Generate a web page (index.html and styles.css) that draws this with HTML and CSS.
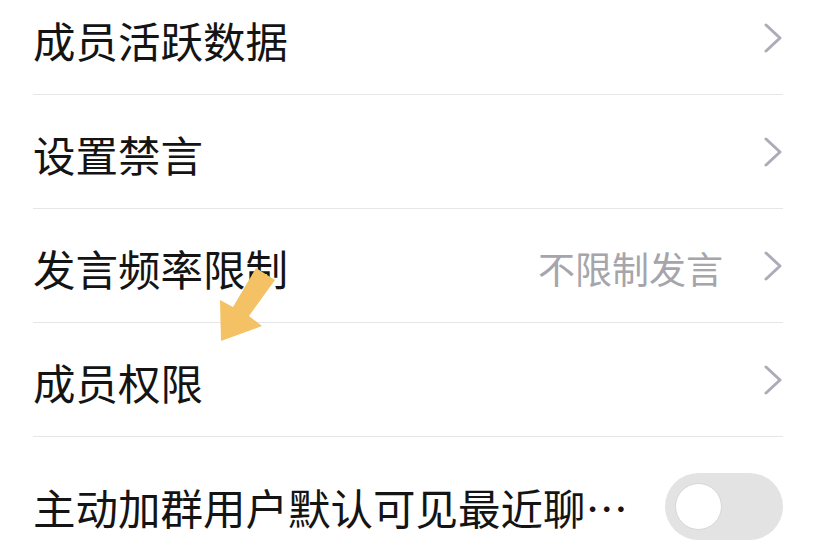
FILE: index.html
```html
<!DOCTYPE html>
<html lang="zh-CN">
<head>
    <meta charset="UTF-8">
    <meta name="viewport" content="width=device-width, initial-scale=1.0">
    <title>群管理</title>
    <link rel="stylesheet" href="styles.css">
</head>
<body>
    <div class="page">
        <div class="list">
            <div class="row">
                <span class="label">成员活跃数据</span>
                <span class="chevron">
                    <svg width="18" height="30" viewBox="0 0 18 30"><polyline points="2,2 16,15 2,28" /></svg>
                </span>
            </div>
            <div class="row">
                <span class="label">设置禁言</span>
                <span class="chevron">
                    <svg width="18" height="30" viewBox="0 0 18 30"><polyline points="2,2 16,15 2,28" /></svg>
                </span>
            </div>
            <div class="row">
                <span class="label">发言频率限制</span>
                <span class="value">不限制发言</span>
                <span class="chevron">
                    <svg width="18" height="30" viewBox="0 0 18 30"><polyline points="2,2 16,15 2,28" /></svg>
                </span>
            </div>
            <div class="row">
                <span class="label">成员权限</span>
                <span class="chevron">
                    <svg width="18" height="30" viewBox="0 0 18 30"><polyline points="2,2 16,15 2,28" /></svg>
                </span>
            </div>
            <div class="row row-switch">
                <span class="label">主动加群用户默认可见最近聊天记录</span>
                <span class="switch"><span class="knob"></span></span>
            </div>
        </div>

        <!-- pointer arrow -->
        <svg class="pointer" width="60" height="80" viewBox="0 0 60 80">
            <polygon points="36,0 55,12 29,48 42,58 1,73 0,32 13,39" />
        </svg>
    </div>
</body>
</html>
```

FILE: styles.css
```css
* {
    margin: 0;
    padding: 0;
    box-sizing: border-box;
}

body {
    background: #fff;
    font-family: "Noto Sans CJK SC", "Noto Sans", sans-serif;
    overflow: hidden;
}

.page {
    position: relative;
    display: flow-root;
    width: 820px;
    height: 546px;
    overflow: hidden;
}

.list {
    margin-top: -19px;
}

.row {
    display: flex;
    align-items: center;
    height: 114px;
    margin: 0 37px 0 33px;
    border-bottom: 1px solid #e6e6e9;
}

.label {
    flex: 1;
    min-width: 0;
    font-size: 42.5px;
    color: #141414;
    white-space: nowrap;
    overflow: hidden;
    text-overflow: ellipsis;
    padding-top: 4px;
}

.value {
    font-size: 37px;
    color: #a5a5ab;
    margin-right: 41px;
    padding-top: 4px;
}

.chevron {
    display: flex;
    margin-right: 1px;
}

.chevron polyline {
    fill: none;
    stroke: #ababba;
    stroke-width: 3;
    stroke-linecap: round;
    stroke-linejoin: round;
}

.row-switch {
    height: 108px;
    align-items: flex-start;
    padding-top: 36px;
    border-bottom: none;
}

.row-switch .label {
    margin-right: 20px;
    padding-top: 3px;
}

.switch {
    display: flex;
    align-items: center;
    flex-shrink: 0;
    width: 118px;
    height: 67px;
    padding-left: 10px;
    border-radius: 34px;
    background: #e3e3e3;
}

.knob {
    width: 47px;
    height: 47px;
    border-radius: 50%;
    background: #fff;
    border: 1px solid #d6d6d6;
}

.pointer {
    position: absolute;
    left: 220px;
    top: 268px;
}

.pointer polygon {
    fill: #f4c264;
}
```
